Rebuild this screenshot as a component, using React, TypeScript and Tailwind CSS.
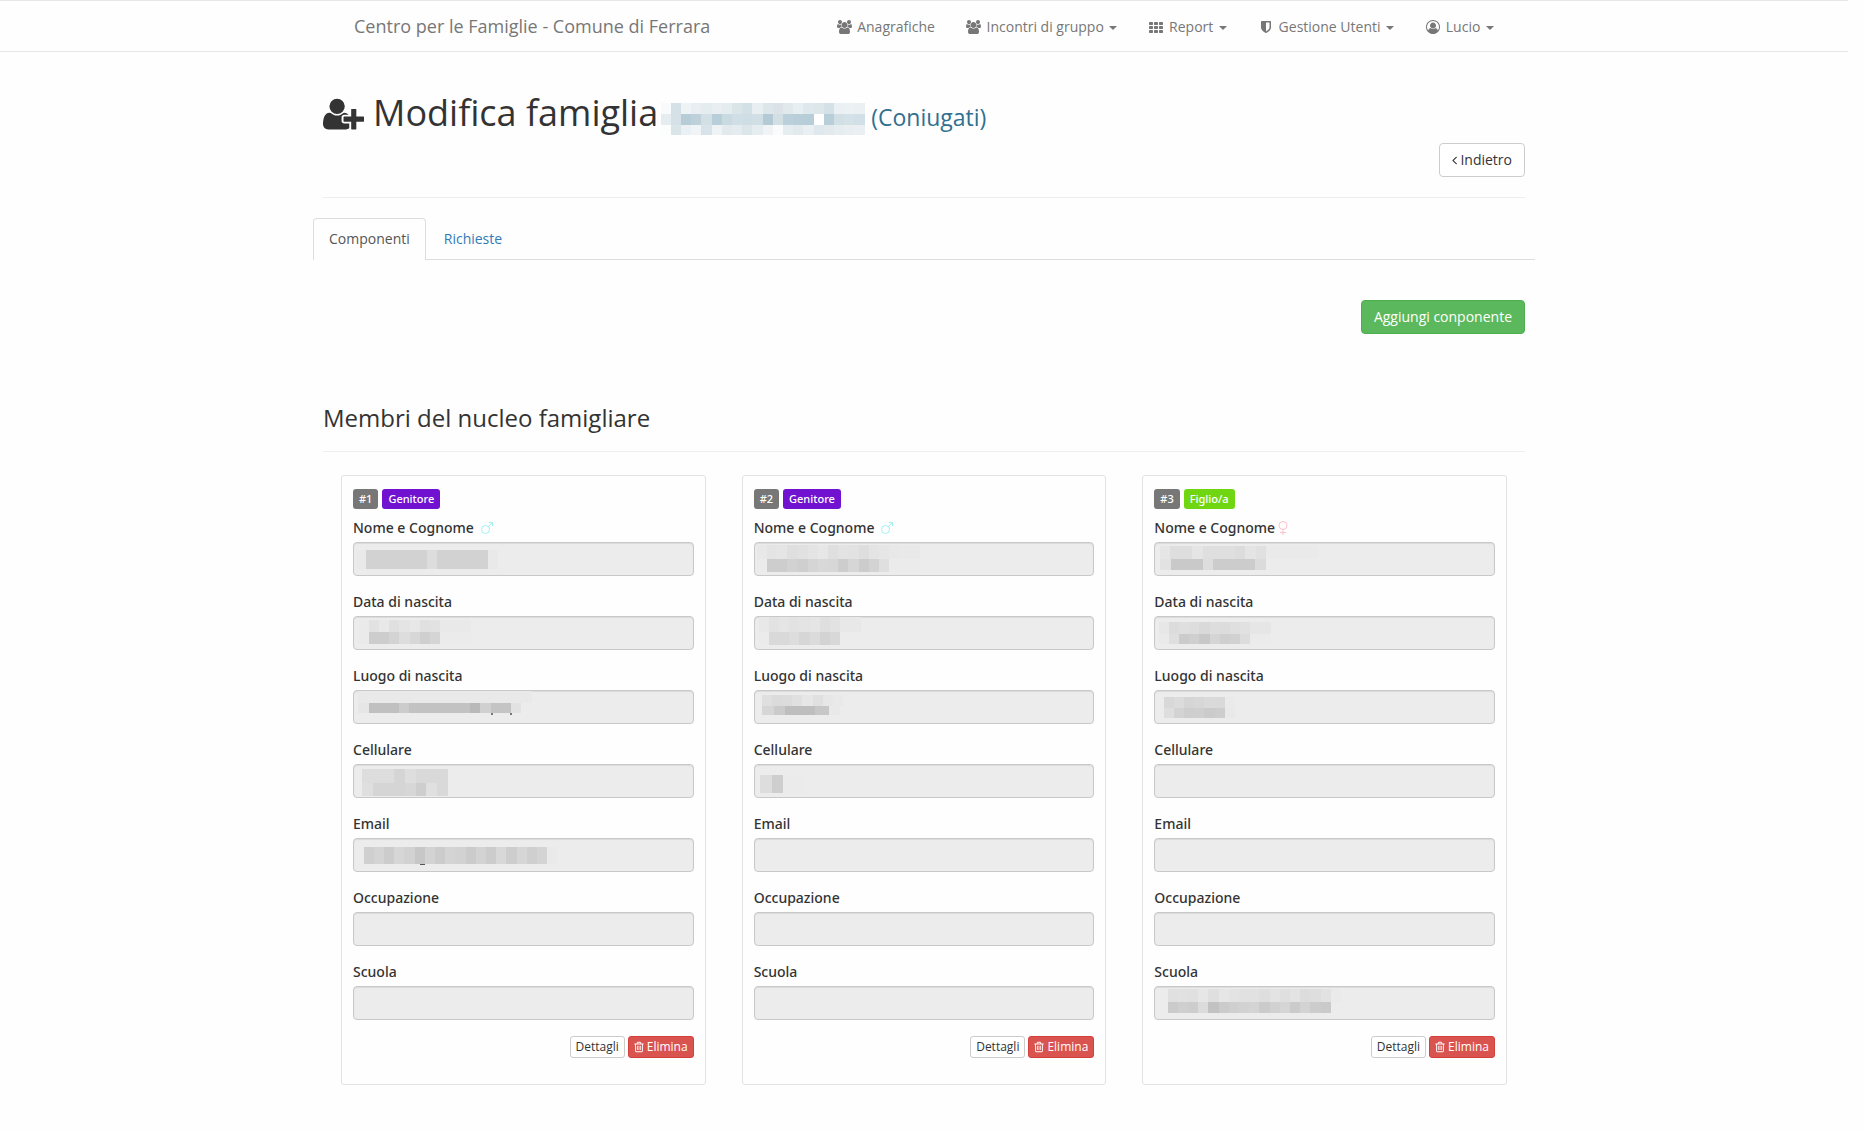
import React, { useId } from "react";

type Segment = [width: number, color: string];
type Row = [height: number, segments: Segment[]];
type Mask = { left: number; top: number; rows: Row[] };

const CLEAR = "transparent";

const cells = (colors: string): Segment[] =>
  colors.split(" ").map((c, i) => [i % 5 === 4 ? 11 : 10, "#" + (c.length === 2 ? c + c + c : c)] as Segment);

function MaskRows({ rows }: { rows: Row[] }) {
  return (
    <>
      {rows.map(([height, segments], r) => (
        <span key={r} className="flex" style={{ height }}>
          {segments.map(([width, color], i) => (
            <span key={i} className="block h-full shrink-0" style={{ width, backgroundColor: color }} />
          ))}
        </span>
      ))}
    </>
  );
}

function Glyph({ width, className, d }: { width: number; className: string; d: string }) {
  return (
    <svg viewBox={`0 0 ${width} 1792`} className={className + " shrink-0"} fill="currentColor" aria-hidden="true">
      <path d={d} />
    </svg>
  );
}

const USER_PLUS =
  "M704 896q-159 0-271.5-112.5T320 512t112.5-271.5T704 128t271.5 112.5T1088 512 975.5 783.5 704 896zm960 128h352q13 0 22.5 9.5t9.5 22.5v192q0 13-9.5 22.5t-22.5 9.5h-352v352q0 13-9.5 22.5t-22.5 9.5h-192q-13 0-22.5-9.5t-9.5-22.5v-352h-352q-13 0-22.5-9.5t-9.5-22.5v-192q0-13 9.5-22.5t22.5-9.5h352V672q0-13 9.5-22.5t22.5-9.5h192q13 0 22.5 9.5t9.5 22.5v352zm-736 224q0 52 38 90t90 38h256v238q-68 50-171 50H267q-121 0-194-69T0 1405q0-53 3.5-103.5t14-109T44 1084t43-97.5 62-81 85.5-53.5T346 832q19 0 39 17 79 61 154.5 91.5T704 971t164.5-30.5T1023 849q20-17 39-17 132 0 217 96h-223q-52 0-90 38t-38 90v192z";
const USERS =
  "M593 896q-162 5-265 128H194q-82 0-138-40.5T0 865q0-353 124-353 6 0 43.5 21t97.5 42.5T384 597q67 0 133-23-5 37-5 66 0 139 81 256zm1071 637q0 120-73 189.5t-194 69.5H523q-121 0-194-69.5T256 1533q0-53 3.5-103.5t14-109T300 1212t43-97.5 62-81 85.5-53.5T602 960q10 0 43 21.5t73 48 107 48 135 21.5 135-21.5 107-48 73-48 43-21.5q61 0 111.5 20t85.5 53.5 62 81 43 97.5 26.5 108.5 14 109 3.5 103.5zM640 256q0 106-75 181t-181 75-181-75-75-181 75-181T384 0t181 75 75 181zm704 384q0 159-112.5 271.5T960 1024 688.5 911.5 576 640t112.5-271.5T960 256t271.5 112.5T1344 640zm576 225q0 78-56 118.5t-138 40.5h-134q-103-123-265-128 81-117 81-256 0-29-5-66 66 23 133 23 59 0 119-21.5t97.5-42.5 43.5-21q124 0 124 353zm-128-609q0 106-75 181t-181 75-181-75-75-181 75-181 181-75 181 75 75 181z";
const SHIELD =
  "M1088 960V320H640v1137q119-63 213-137 235-184 235-360zm192-768v768q0 86-33.5 170.5t-83 150-118 127.5-126.5 103-121 77.5-89.5 49.5-42.5 20q-12 6-26 6t-26-6q-16-7-42.5-20t-89.5-49.5-121-77.5-126.5-103-118-127.5-83-150T0 960V192q0-26 19-45t45-19h1152q26 0 45 19t19 45z";
const USER_CIRCLE =
  "M896 0q182 0 348 71t286 191 191 286 71 348q0 181-70.5 347t-190.5 286-286 191.5-349 71.5-349-71-285.5-191.5-190.5-286-71-347.5 71-348 191-286 286-191 348-71zm619 1351q149-205 149-455 0-156-61-298t-164-245-245-164-298-61-298 61-245 164-164 245-61 298q0 250 149 455 66-327 306-327 131 128 313 128t313-128q240 0 306 327zm-235-647q0-159-112.5-271.5t-271.5-112.5-271.5 112.5-112.5 271.5 112.5 271.5 271.5 112.5 271.5-112.5 112.5-271.5z";
const TRASH =
  "M512 736v576q0 14-9 23t-23 9h-64q-14 0-23-9t-9-23V736q0-14 9-23t23-9h64q14 0 23 9t9 23zm256 0v576q0 14-9 23t-23 9h-64q-14 0-23-9t-9-23V736q0-14 9-23t23-9h64q14 0 23 9t9 23zm256 0v576q0 14-9 23t-23 9h-64q-14 0-23-9t-9-23V736q0-14 9-23t23-9h64q14 0 23 9t9 23zm128 724V512H256v948q0 22 7 40.5t14.5 27 10.5 8.5h832q3 0 10.5-8.5t14.5-27 7-40.5zM480 384h448l-48-117q-7-9-17-11H546q-10 2-17 11zm928 32v64q0 14-9 23t-23 9h-96v948q0 83-47 143.5t-113 60.5H288q-66 0-113-58.5T128 1464V512H32q-14 0-23-9t-9-23v-64q0-14 9-23t23-9h309l70-167q15-37 54-63t79-26h320q40 0 79 26t54 63l70 167h309q14 0 23 9t9 23z";
const ANGLE_LEFT =
  "M627 544q0 13-10 23L224 960l393 393q10 10 10 23t-10 23l-50 50q-10 10-23 10t-23-10L55 983q-10-10-10-23t10-23l466-466q10-10 23-10t23 10l50 50q10 10 10 23z";

const GroupIcon = () => <Glyph width={1920} className="h-[14px] w-[15px]" d={USERS} />;
const GridIcon = () => (
  <svg viewBox="0 0 14 14" className="h-[14px] w-[14px] shrink-0" fill="currentColor" aria-hidden="true">
    {[2, 6, 10].map((y) => [0, 5, 10].map((x) => <rect key={x + "-" + y} x={x} y={y} width="4" height="3" rx="0.7" />))}
  </svg>
);
const MarsIcon = () => (
  <svg viewBox="0 0 12 12" className="ml-1 h-3 w-3 text-[#a0f0f0]" fill="none" stroke="currentColor" aria-hidden="true">
    <circle cx="4.5" cy="7.5" r="4" />
    <path d="M7.5 4.5 11.3 0.7M8 0.5h3.5V4" />
  </svg>
);
const VenusIcon = () => (
  <svg viewBox="0 0 10 14" className="h-[14px] w-[10px] text-[#ffc0cb]" fill="none" stroke="currentColor" aria-hidden="true">
    <circle cx="5" cy="4.5" r="4" />
    <path d="M5 8.5V14M2 11.5h6" />
  </svg>
);
const Caret = () => (
  <span
    className="ml-[2px] inline-block h-0 w-0 border-x-4 border-t-4 border-x-transparent border-t-current align-middle"
    aria-hidden="true"
  />
);

const NAV = [
  { icon: <GroupIcon />, label: "Anagrafiche", menu: false },
  { icon: <GroupIcon />, label: "Incontri di gruppo", menu: true },
  { icon: <GridIcon />, label: "Report", menu: true },
  { icon: <Glyph width={1280} className="h-[14px] w-[10px]" d={SHIELD} />, label: "Gestione Utenti", menu: true },
  { icon: <Glyph width={1792} className="h-[14px] w-[14px]" d={USER_CIRCLE} />, label: "Lucio", menu: true },
];

const FIELDS = ["Nome e Cognome", "Data di nascita", "Luogo di nascita", "Cellulare", "Email", "Occupazione", "Scuola"];

type Member = { role: string; child?: boolean; masks: Record<string, Mask> };

const MEMBERS: Member[] = [
  {
    role: "Genitore",
    masks: {
      "Nome e Cognome": { left: 3, top: 8, rows: [[19, [[10, "#e9e9e9"], [61, "#d2d2d2"], [10, "#dddddd"], [51, "#d2d2d2"], [10, "#e9e9e9"]]]] },
      "Data di nascita": {
        left: 6, top: 4,
        rows: [[12, cells("ea e2 e8 e0 e4 e7 e0 e2 e9 e9 e9")], [12, cells("ea cd cd d3 dd d7 cf d5 eb eb eb")]],
      },
      "Luogo di nascita": {
        left: 5, top: 1,
        rows: [
          [12, [[174, "#e9e9e9"]]],
          [10, [[11, "#e6e6e6"], [30, "#c0c0c0"], [10, "#cccccc"], [61, "#c2c2c2"], [10, "#b9b9b9"], [11, "#d0d0d0"], [20, "#c4c4c4"], [10, "#e2e2e2"]]],
          [2, [[133, CLEAR], [2, "#777777"], [17, CLEAR], [2, "#777777"]]],
        ],
      },
      Cellulare: {
        left: 9, top: 5,
        rows: [
          [14, [[32, "#dddddd"], [11, "#d5d5d5"], [11, "#dedede"], [32, "#d9d9d9"], [10, "#ececec"]]],
          [13, [[11, "#dfdfdf"], [32, "#d5d5d5"], [11, "#d7d7d7"], [10, "#cecece"], [11, "#e0e0e0"], [11, "#d9d9d9"], [10, "#ececec"]]],
        ],
      },
      Email: {
        left: 11, top: 9,
        rows: [[17, cells("cf d4 cc d6 d2 c7 d3 cc d4 d2 cb d3 cc d8 cd d6 cf d4 ea")], [1, [[56, CLEAR], [5, "#555555"]]]],
      },
    },
  },
  {
    role: "Genitore",
    masks: {
      "Nome e Cognome": {
        left: 3, top: 3,
        rows: [[14, cells("e8 e4 e5 df e1 e4 e7 df e3 e2 de e4 e6 e8 e9 e9")], [13, cells("eb cd cd d2 cf d5 d8 d7 cd d6 cc d3 df eb eb eb")]],
      },
      "Data di nascita": { left: 5, top: 1, rows: [[15, cells("e8 e2 e5 e2 e4 e5 df e2 e8 e8")], [13, cells("eb d9 d9 dd d6 db d3 d8 ec ec")]] },
      "Luogo di nascita": { left: 8, top: 5, rows: [[11, cells("df db dc e0 e6 e0 e7 e9")], [9, [[12, "#d6d6d6"], [11, "#cbcbcb"], [30, "#bebebe"], [14, "#c7c7c7"], [11, "#e9e9e9"]]]] },
      Cellulare: { left: 6, top: 11, rows: [[18, [[12, "#dddddd"], [11, "#cecece"], [22, "#ebebeb"]]]] },
    },
  },
  {
    role: "Figlio/a",
    child: true,
    masks: {
      "Nome e Cognome": {
        left: 6, top: 4,
        rows: [
          [13, [[10, "#e6e6e6"], [22, "#dedede"], [11, "#e5e5e5"], [32, "#dfdfdf"], [10, "#dcdcdc"], [11, "#e4e4e4"], [10, "#e0e0e0"], [52, "#eaeaea"]]],
          [11, [[11, "#e2e2e2"], [32, "#c9c9c9"], [10, "#dddddd"], [42, "#cccccc"], [11, "#dbdbdb"], [52, "#ececec"]]],
        ],
      },
      "Data di nascita": { left: 5, top: 6, rows: [[12, cells("e7 dc df dd d9 dd dc df e1 e6 e6")], [10, cells("ea df cb cf c8 d5 cf d1 dd eb eb")]] },
      "Luogo di nascita": { left: 10, top: 7, rows: [[11, cells("d8 dc d5 d7 da d9 ea")], [10, cells("de d3 ce cf cb cd e9")]] },
      Scuola: {
        left: 14, top: 3,
        rows: [[13, cells("e0 e1 e0 e6 df e6 e3 e1 e1 de e3 df e3 dc de e2 ea")], [11, cells("cb cf cd db c2 cb cf d2 d4 cb d1 d5 cb d3 cc ca ec")]],
      },
    },
  },
];

const TITLE_ROWS: Row[] = [
  [11, cells("f9fafb d5e1e6 eef3f5 e8eef1 e4ecef e8eef1 e4ecef dae5ea d3e1e7 e8eef1 dde7eb dbe3e8 e1e9ed e8eff2 dfe8ec dce6eb d4e1e7 eaf0f3 ecf1f3 ebf0f3")],
  [11, cells("e6edf0 d5e1e6 b6ccd7 bed1da d2e0e6 b8ced8 cadae1 d0dee5 cfdde4 d0dee5 b4cbd5 d2e0e6 bbd0da b8ced8 b7cdd7 ffffff b8ced8 d2e0e6 d4e1e7 d1dfe6")],
  [10, cells("fcfdfd dae5ea eaf0f3 f0f4f7 d7e3e8 eef3f5 e2eaee e4ecef dbe6eb e6edf0 f0f4f7 fafbfc e6edf0 e2eaee e9eff2 dfe8ec e2eaee e6edf0 e9eff1 e9eff2")],
];

function Field({ label, mask, icon }: { label: string; mask?: Mask; icon?: React.ReactNode }) {
  const id = useId();
  return (
    <div className="mb-4">
      <label htmlFor={id} className="mb-1 flex items-center gap-[3px] font-['Noto_Sans',sans-serif] font-medium">
        {label}
        {icon}
      </label>
      <div className="relative">
        <input
          id={id}
          type="text"
          readOnly
          className="block h-[34px] w-full rounded border border-[#c8c8c8] bg-[#ececec] px-3 shadow-[inset_0_1px_1px_rgba(0,0,0,0.075)]"
        />
        {mask && (
          <span className="pointer-events-none absolute" style={{ left: mask.left, top: mask.top }}>
            <MaskRows rows={mask.rows} />
          </span>
        )}
      </div>
    </div>
  );
}

function MemberCard({ member, index }: { member: Member; index: number }) {
  return (
    <article className="rounded-[3px] border border-[#e3e3e3] px-[11px] pt-[13px] pb-[26px]">
      <div className="mb-[9px] flex gap-1 font-['Noto_Sans',sans-serif] text-[11px] leading-5 font-medium text-white">
        <span className="rounded-[3px] bg-[#777777] px-[6px]">#{index + 1}</span>
        <span className={member.child ? "rounded-[3px] bg-[#70d612] px-[6px]" : "rounded-[3px] bg-[#7012d0] px-[6px]"}>
          {member.role}
        </span>
      </div>
      {FIELDS.map((label, i) => (
        <Field
          key={label}
          label={label}
          mask={member.masks[label]}
          icon={i === 0 ? member.child ? <VenusIcon /> : <MarsIcon /> : undefined}
        />
      ))}
      <div className="flex justify-end gap-[3px] text-xs">
        <button type="button" className="h-[22px] rounded-[3px] border border-[#cccccc] bg-white px-[5px]">
          Dettagli
        </button>
        <button
          type="button"
          className="flex h-[22px] items-center gap-[3px] rounded-[3px] border border-[#d43f3a] bg-[#d9534f] px-[5px] text-white"
        >
          <Glyph width={1408} className="h-3 w-[10px]" d={TRASH} />
          Elimina
        </button>
      </div>
    </article>
  );
}

export default function App() {
  return (
    <div className="min-h-screen bg-[#fefefe] pr-[15px] pb-[46px] font-['Open_Sans',sans-serif] text-sm leading-5 text-[#333333]">
      <header className="border-y border-[#e7e7e7]">
        <nav className="mx-auto flex h-[50px] max-w-[1170px] items-center justify-between text-[#777777]">
          <a href="#" className="px-[15px] text-lg">
            Centro per le Famiglie - Comune di Ferrara
          </a>
          <ul className="flex">
            {NAV.map((item) => (
              <li key={item.label}>
                <a href="#" className="block px-[15px] pt-4 pb-[14px]">
                  <span className="inline-flex w-[18px] justify-center align-[-2px]">{item.icon}</span> {item.label}
                  {item.menu && (
                    <>
                      {" "}
                      <Caret />
                    </>
                  )}
                </a>
              </li>
            ))}
          </ul>
        </nav>
      </header>

      <main className="mx-auto max-w-[1222px] px-[10px]">
        <div className="border-b border-[#eeeeee] pt-[41px] pb-5">
          <h1 className="flex h-[42px] items-baseline text-4xl leading-[40px]">
            <Glyph width={2048} className="mr-[9px] h-[36px] w-[41px] self-center" d={USER_PLUS} />
            Modifica famiglia
            <span className="mr-[6px] ml-[3px] self-end">
              <MaskRows rows={TITLE_ROWS} />
            </span>
            <small className="text-[23px] text-[#31708f]">(Coniugati)</small>
          </h1>
          <div className="mt-2 flex justify-end">
            <a
              href="#"
              className="flex h-[34px] items-center gap-[3px] rounded border border-[#cccccc] bg-white px-3"
            >
              <Glyph width={640} className="h-[14px] w-[5px]" d={ANGLE_LEFT} />
              Indietro
            </a>
          </div>
        </div>

        <div role="tablist" className="-mx-[10px] mt-5 flex border-b border-[#dddddd]">
          <button
            type="button"
            role="tab"
            aria-selected="true"
            className="-mb-px mr-[2px] h-[42px] rounded-t border border-b-0 border-[#dddddd] bg-[#fefefe] px-[15px] pb-[2px] text-[#555555]"
          >
            Componenti
          </button>
          <button type="button" role="tab" aria-selected="false" className="h-[41px] px-4 text-[#337ab7]">
            Richieste
          </button>
        </div>

        <div className="mt-10 flex justify-end">
          <button type="button" className="h-[34px] rounded border border-[#4cae4c] bg-[#5cb85c] px-3 text-white">
            Aggiungi conponente
          </button>
        </div>

        <section>
          <h3 className="mt-[70px] border-b border-[#eeeeee] pb-[19px] text-2xl leading-7">Membri del nucleo famigliare</h3>
          <div className="mt-[23px] grid grid-cols-3 gap-9 px-[18px]">
            {MEMBERS.map((member, i) => (
              <MemberCard key={i} member={member} index={i} />
            ))}
          </div>
        </section>
      </main>
    </div>
  );
}
